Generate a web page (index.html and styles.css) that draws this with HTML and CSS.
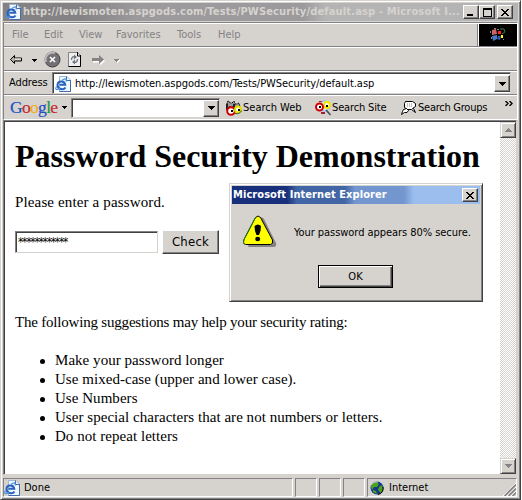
FILE: index.html
```html
<!DOCTYPE html>
<html lang="en">
<head>
<meta charset="utf-8">
<title>Password Security Demonstration</title>
<link rel="stylesheet" href="styles.css">
</head>
<body>
<svg class="defs" aria-hidden="true">
  <symbol id="ie" viewBox="0 0 16 16">
    <path d="M4.500 .5h7.500l3.500 3.500v11.500h-11z" fill="#eff7ff" stroke="#9cb6d6"/>
    <path d="M11.500 .5v4h4M15.500 4v11.500h-11" fill="none" stroke="#426bad"/>
    <path d="M10.500 11.500C8.500 14.500 2.500 13.500 2.500 9S9.500 4 10.300 8.800H4.500" fill="none" stroke="#2963bd" stroke-width="2"/>
    <path d="M1.500 10.500C-.5 14 2 14.500 5 12M7 4.500c2.500-2 5-2.500 4 1" fill="none" stroke="#4a8ede" stroke-width="1.200"/>
  </symbol>
  <symbol id="down" viewBox="0 0 7 4"><path d="M0 0h7v1h-1v1h-1v1h-1v1h-1v-1h-1v-1h-1v-1h-1z" fill="currentColor"/></symbol>
  <symbol id="cross" viewBox="0 0 8 7"><path d="M0 0h2v1h1v1h2v-1h1v-1h2v1h-1v1h-1v1h-1v1h1v1h1v1h1v1h-2v-1h-1v-1h-2v1h-1v1h-2v-1h1v-1h1v-1h1v-1h-1v-1h-1v-1h-1z"/></symbol>
</svg>
<div class="window">
  <header class="titlebar">
    <svg class="ico"><use href="#ie"/></svg>
    <span class="caption">http://lewismoten.aspgods.com/Tests/PWSecurity/default.asp - Microsoft I...</span>
    <span class="cap-btn"><svg width="8" height="7"><path d="M0 5h6v2h-6z"/></svg></span>
    <span class="cap-btn"><svg width="9" height="9"><path d="M0 0h9v9h-9zM1 2v6h7v-6z" fill-rule="evenodd"/></svg></span>
    <span class="cap-btn close"><svg width="8" height="7"><use href="#cross"/></svg></span>
  </header>
  <div class="bars">
    <nav class="menubar">
      <span class="m1">File</span><span class="m2">Edit</span><span class="m3">View</span><span class="m4">Favorites</span><span class="m5">Tools</span><span class="m6">Help</span>
      <div class="brand">
        <svg width="16" height="14" viewBox="0 0 16 14">
          <path d="M2 2l4-1 1 5-5 1z" fill="#c66"/><path d="M8 3h3v3h-3z" fill="#f22"/><path d="M10 1l4 0 1 3-3 2" fill="none" stroke="#4a7a4a"/>
          <path d="M2 8l5-1v4l-4 2z" fill="#4a7ac6"/><path d="M8 8l3 0-1 4-3-1z" fill="#35a"/><path d="M11 7h2v3h-2z" fill="#ff0"/>
          <path d="M0 3h1v2h-1zM4 0h2v1h-2zM1 9h1v2h-1zM13 11h1v1h-1zM7 1h2v1h-2z" fill="#888"/>
        </svg>
      </div>
    </nav>
    <div class="toolbar">
      <svg width="120" height="20" viewBox="0 0 120 20">
        <path d="M.5 8.500l4-4v2.500h7v3h-7v2.500z" fill="#b5b2ad" stroke="#000"/><path d="M5 8h6" stroke="#fff"/>
        <path d="M22 8h5v1h-1v1h-1v1h-1v-1h-1v-1h-1z"/>
        <circle cx="42.500" cy="8.500" r="7.500" fill="#737173" stroke="#404040"/><path d="M36 11a7 7 0 0 1 9-9" stroke="#bdbabd" stroke-width="2" fill="none"/>
        <path d="M40 6l5 5M45 6l-5 5" stroke="#fff" stroke-width="1.600"/>
        <path d="M58.500 1.500h9l3 3v11h-12z" fill="#efefef" stroke="#848284"/><path d="M67.500 1v4h3.500M70.500 4v11.500h-12" fill="none" stroke="#000"/>
        <path d="M61.500 9c0-3 1.500-3.500 3-3M67.500 8c0 3-1.500 3.500-3 3" fill="none" stroke="#737584" stroke-width="1.400"/><path d="M64 3.500l3 2.500-3 2.500zM65 13.500l-3-2.500 3-2.500z" fill="#737584"/>
        <path d="M83 8h7v-3l5 4.500-5 4.500v-3h-7z" fill="#fff" transform="translate(0 .5)"/><path d="M82 7h7v-3l5 4.500-5 4.500v-3h-7z" fill="#848284"/>
        <path d="M105 9h5v1h-1v1h-1v1h-1v-1h-1v-1h-1z" fill="#fff"/><path d="M104 8h5v1h-1v1h-1v1h-1v-1h-1v-1h-1z" fill="#848284"/>
      </svg>
    </div>
    <div class="address">
      <span class="label">Address</span>
      <div class="combo url"><svg class="ico"><use href="#ie"/></svg><span>http://lewismoten.aspgods.com/Tests/PWSecurity/default.asp</span><i class="drop"><svg width="7" height="4"><use href="#down"/></svg></i></div>
    </div>
    <div class="google">
      <b class="logo"><span class="b">G</span><span class="r">o</span><span class="y">o</span><span class="b">g</span><span class="g">l</span><span class="r">e</span></b>
      <svg class="tri" width="5" height="3" viewBox="0 0 5 3"><path d="M0 0h5v1h-1v1h-1v1h-1v-1h-1v-1h-1z"/></svg>
      <div class="combo query"><i class="drop"><svg width="7" height="4"><use href="#down"/></svg></i></div>
      <span class="link web"><svg class="ico" viewBox="0 0 16 16">
        <path d="M1 2l2-1 1 2h2l2-2 1 3h2l2-1 1 4h-13z" fill="#9c9a9c" stroke="#000" stroke-dasharray="2 1"/><path d="M0 4h2v6h-2zM7 4h2v4h-2z" fill="#212021"/>
        <circle cx="5" cy="11" r="3.800" fill="#fff" stroke="#c60000" stroke-width="2"/><path d="M5 10h2v2h-2z"/>
        <circle cx="12" cy="9.500" r="3" fill="#fff" stroke="#dede00" stroke-width="2"/><path d="M12 9h2v2h-2z"/><path d="M9 13.500q5 1 6.500-3" stroke="#31612a" fill="none"/>
      </svg>Search Web</span>
      <span class="link site"><svg class="ico" viewBox="0 0 16 16">
        <path d="M4 1h4v1h-4zM6 12h4v2h-4z" fill="#a52129"/><circle cx="9.500" cy="6" r="5" fill="#dee7f7" stroke="#8cb6de"/><circle cx="12" cy="5" r="3" fill="#fff" stroke="#f7e700" stroke-width="2"/><path d="M11 5h2v2h-2z"/>
        <circle cx="4.500" cy="7" r="3.500" fill="#fff" stroke="#ce0000" stroke-width="2"/><path d="M4 6h2v2h-2z"/><path d="M11 10l4.500 5" stroke="#42516b" stroke-width="1.700"/>
      </svg>Search Site</span>
      <span class="link groups"><svg class="ico" viewBox="0 0 16 16">
        <path d="M4.500 1.500h7l3 2v3l-3 2h1l2 4-4-3h-4l-3-2v-4z" fill="#fff" stroke="#000"/><path d="M2.500 9.500l3-1 2 2-1.500 2h-2.500l-3 2 1-3z" fill="#fff" stroke="#000"/><path d="M6 4h6M6 6h5" stroke="#848284" stroke-dasharray="1 1"/>
      </svg>Search Groups</span>
      <svg class="more" width="8" height="5" viewBox="0 0 8 5"><path d="M.5 0l2.500 2.500-2.500 2.500M4.500 0l2.500 2.500-2.500 2.500" fill="none" stroke="#000" stroke-width="1.400"/></svg>
    </div>
  </div>
  <div class="view">
    <main class="page">
      <h1>Password Security Demonstration</h1>
      <p class="ask">Please enter a password.</p>
      <div class="form"><div class="field">************</div><div class="check">Check</div></div>
      <p class="tips">The following suggestions may help your security rating:</p>
      <ul>
        <li>Make your password longer</li>
        <li>Use mixed-case (upper and lower case).</li>
        <li>Use Numbers</li>
        <li>User special characters that are not numbers or letters.</li>
        <li>Do not repeat letters</li>
      </ul>
    </main>
    <div class="scroll"><i class="arrow up"><svg width="7" height="4"><use href="#down"/></svg></i><i class="arrow"><svg width="7" height="4"><use href="#down"/></svg></i></div>
  </div>
  <footer class="status">
    <div class="cell done"><svg class="ico"><use href="#ie"/></svg>Done</div>
    <div class="cell"></div><div class="cell"></div><div class="cell"></div>
    <div class="cell zone"><svg width="14" height="14" viewBox="0 0 14 14"><circle cx="7" cy="7" r="6.500" fill="#18388c"/><path d="M2 3l4-2 3 2-2 3-3 0-2 3-1-3zM9 6l3-2 1 4-2 4-3-3zM3 9l3 1 1 3-4-2z" fill="#4aa618"/><path d="M1 4q3-4 7-3" fill="none" stroke="#c6cfc6"/><path d="M13 6q1 6-5 7.500" fill="none" stroke="#000"/></svg>Internet
      <svg class="grip" width="13" height="13" viewBox="0 0 13 13"><path d="M0 13l13-13M4 13l9-9M8 13l5-5" stroke="#fff"/><path d="M1.500 13l11.500-11.500M5.500 13l7.500-7.500M9.500 13l3.500-3.500" stroke="#848284" stroke-width="1.600"/></svg>
    </div>
  </footer>
</div>
<section class="dialog">
  <header><span>Microsoft Internet Explorer</span><i class="cap-btn"><svg width="8" height="7"><use href="#cross"/></svg></i></header>
  <div class="message">
    <svg width="34" height="33" viewBox="0 0 34 33">
      <path d="M16 3q3-2 5 1l12 24q1 4-3 4h-25z" fill="#848284"/>
      <path d="M12.500 2.500q2.500-3 5 0l12 22.500q1 4-2 4.500h-25q-3-1-1.500-5z" fill="#ff0" stroke="#000"/>
      <path d="M12.500 2.500l-11.500 22q-1.500 4 1.500 5" fill="none" stroke="#218221"/>
      <path d="M11.500 11q3.500-3 6.500 0 0 5-2 9h-2.500q-2-4-2-9z"/><ellipse cx="14.700" cy="24" rx="2.500" ry="2.200"/>
    </svg>
    <span>Your password appears 80% secure.</span>
  </div>
  <div class="ok">OK</div>
</section>
</body>
</html>
```
FILE: styles.css
```css
* { box-sizing: border-box; }
body {
  margin: 0;
  width: 522px;
  height: 500px;
  overflow: hidden;
  background: #fff;
  color: #000;
  font: 11px/14px "DejaVu Sans Condensed", "DejaVu Sans", sans-serif;
  white-space: nowrap;
}
svg { display: block; flex: none; }
i { font-style: normal; }
.defs { position: absolute; width: 0; height: 0; }
.ico { width: 16px; height: 16px; }

.window {
  width: 521px;
  height: 500px;
  display: flex;
  flex-direction: column;
  padding: 1px 1px 2px 2px;
  background: #d6d3ce;
  border: 1px solid;
  border-color: #d6d3ce #424142 #424142 #d6d3ce;
  box-shadow: inset 1px 1px #fff, inset -1px -1px #848284;
}
.titlebar {
  height: 18px;
  margin: 1px 1px 0 0;
  padding: 0 2px;
  display: flex;
  align-items: center;
  background: linear-gradient(90deg, #848284 75px, #9c9a9c 135px, #9c9a9c 300px, #b5b4b5 322px);
  color: #d6d3ce;
  font-weight: bold;
}
.caption { width: 441px; margin-left: 1px; padding-left: 1px; letter-spacing: .16px; }
.cap-btn {
  width: 16px;
  height: 14px;
  flex: none;
  display: flex;
  align-items: center;
  justify-content: center;
  background: #d6d3ce;
  border: 1px solid;
  border-color: #fff #424142 #424142 #fff;
  box-shadow: inset -1px -1px #848284;
}
.cap-btn.close { margin-left: 2px; }

.bars {
  height: 98px;
  margin: 1px 1px 0 0;
  border: 1px solid;
  border-color: #848284 #fff #fff #848284;
}
.menubar {
  height: 24px;
  display: flex;
  align-items: center;
  border-top: 1px solid #fff;
  border-bottom: 1px solid #848284;
  color: #848284;
  padding-left: 8px;
}
.m1 { width: 32px; } .m2 { width: 35px; } .m3 { width: 37px; }
.m4 { width: 61px; } .m5 { width: 41px; } .m6 { width: 40px; }
.brand {
  height: 22px;
  width: 39px;
  margin-left: auto;
  display: flex;
  align-items: center;
  justify-content: center;
  background: #000;
  border-left: 1px solid #fff;
  box-shadow: -1px 0 #848284;
}
.toolbar {
  height: 24px;
  padding: 3px 0 0 6px;
  border-top: 1px solid #fff;
  border-bottom: 1px solid #848284;
}
.address {
  height: 24px;
  display: flex;
  border-top: 1px solid #fff;
  border-bottom: 1px solid #848284;
}
.label { width: 48px; padding: 4px 0 0 5px; letter-spacing: -.1px; }
.combo {
  display: flex;
  align-items: center;
  background: #fff;
  border: 1px solid;
  border-color: #848284 #d6d3ce #d6d3ce #848284;
  box-shadow: inset 1px 1px #424142;
}
.drop {
  width: 16px;
  height: 17px;
  margin-left: auto;
  display: flex;
  align-items: center;
  justify-content: center;
  background: #d6d3ce;
  border: 1px solid;
  border-color: #fff #424142 #424142 #fff;
  box-shadow: inset -1px -1px #848284;
}
.url { width: 459px; height: 22px; padding: 1px 0 0 2px; }
.url span { margin-left: 4px; letter-spacing: -.05px; }
.google {
  height: 24px;
  display: flex;
  align-items: center;
  border-top: 1px solid #fff;
  padding-left: 6px;
}
.logo { width: 52px; font: 17.500px/20px "Liberation Serif", serif; letter-spacing: -.7px; margin-top: -2px; -webkit-text-stroke: .2px; }
.b { color: #2151c6; } .r { color: #c62931; } .y { color: #efae18; } .g { color: #189a39; }
.query { width: 149px; height: 20px; margin-left: 4px; padding-top: 1px; }
.link { display: flex; align-items: center; gap: 1px; }
.web { margin-left: 6px; width: 89px; }
.site { width: 86px; letter-spacing: -.15px; }
.groups { width: 104px; letter-spacing: -.25px; }
.more { margin-top: -9px; }

.view {
  flex: none;
  height: 355px;
  width: 514px;
  display: flex;
  background: #fff;
  border: 1px solid;
  border-color: #848284 #d6d3ce #d6d3ce #848284;
  box-shadow: inset 1px 1px #424142;
}
.page { width: 496px; padding: 16px 0 0 11px; font: 15px/19px "Liberation Serif", serif; letter-spacing: .04px; }
h1 { margin: 0; font: bold 32px/38px "Liberation Serif", serif; letter-spacing: -.03px; }
p { margin: 0; }
.ask { padding-top: 18px; letter-spacing: .14px; }
.form { display: flex; align-items: center; height: 24px; margin-top: 18px; }
.field {
  width: 143px;
  height: 22px;
  margin-right: 4px;
  padding: 3px 2px;
  border: 1px solid;
  border-color: #848284 #d6d3ce #d6d3ce #848284;
  box-shadow: inset 1px 1px #424142;
  font: 12px/14px "DejaVu Sans Condensed", sans-serif;
  letter-spacing: -1.300px;
}
.check {
  width: 57px;
  height: 24px;
  background: #d6d3ce;
  border: 1px solid;
  border-color: #fff #424142 #424142 #fff;
  box-shadow: inset -1px -1px #848284;
  text-align: center;
  font: 13px/21px "DejaVu Sans Condensed", sans-serif;
  letter-spacing: .2px;
}
.tips { margin-top: 59px; letter-spacing: -.2px; }
ul { margin: 19px 0 0; padding: 0; list-style: none; }
li { display: flex; align-items: center; }
li::before { content: ""; width: 5px; height: 5px; border-radius: 50%; background: #000; margin: 2px 10px 0 25px; }
.scroll {
  width: 16px;
  height: 352px;
  margin-top: 1px;
  display: flex;
  flex-direction: column;
  justify-content: space-between;
  background: repeating-conic-gradient(#d6d3ce 0 25%, #fff 0 50%) 0 0 / 2px 2px;
}
.arrow {
  height: 16px;
  display: flex;
  align-items: center;
  justify-content: center;
  color: #848284;
  background: #d6d3ce;
  border: 1px solid;
  border-color: #d6d3ce #424142 #424142 #d6d3ce;
  box-shadow: inset 1px 1px #fff, inset -1px -1px #848284;
}
.up svg { transform: rotate(180deg); }

.status { display: flex; gap: 2px; height: 19px; margin-top: 3px; flex: none; }
.cell {
  width: 22px;
  display: flex;
  align-items: center;
  border: 1px solid;
  border-color: #848284 #fff #fff #848284;
}
.done { width: 290px; gap: 4px; }
.zone { width: 150px; padding-left: 2px; gap: 5px; }
.grip { margin: 4px 0 0 auto; }

.dialog {
  position: absolute;
  left: 229px;
  top: 183px;
  width: 254px;
  height: 119px;
  padding: 2px;
  background: #d6d3ce;
  border: 1px solid;
  border-color: #d6d3ce #424142 #424142 #d6d3ce;
  box-shadow: inset 1px 1px #fff, inset -1px -1px #848284;
}
.dialog header {
  height: 18px;
  padding: 0 2px;
  display: flex;
  align-items: center;
  justify-content: space-between;
  color: #fff;
  font-weight: bold;
  background: linear-gradient(90deg, #18307b 55px, #4265a5 65px, #4265a5 113px, #7396ce 123px, #7396ce 172px, #9cbeef 182px);
}
.dialog header span { margin-left: -1px; letter-spacing: .07px; }
.message { display: flex; align-items: center; margin: 11px 0 0 11px; }
.message span { margin-left: 17px; padding-top: 2px; letter-spacing: -.05px; }
.ok {
  width: 75px;
  height: 23px;
  margin: 17px 0 0 86px;
  border: 1px solid #000;
  box-shadow: inset 1px 1px #fff, inset -1px -1px #424142, inset -2px -2px #848284;
  text-align: center;
  line-height: 21px;
}
```
